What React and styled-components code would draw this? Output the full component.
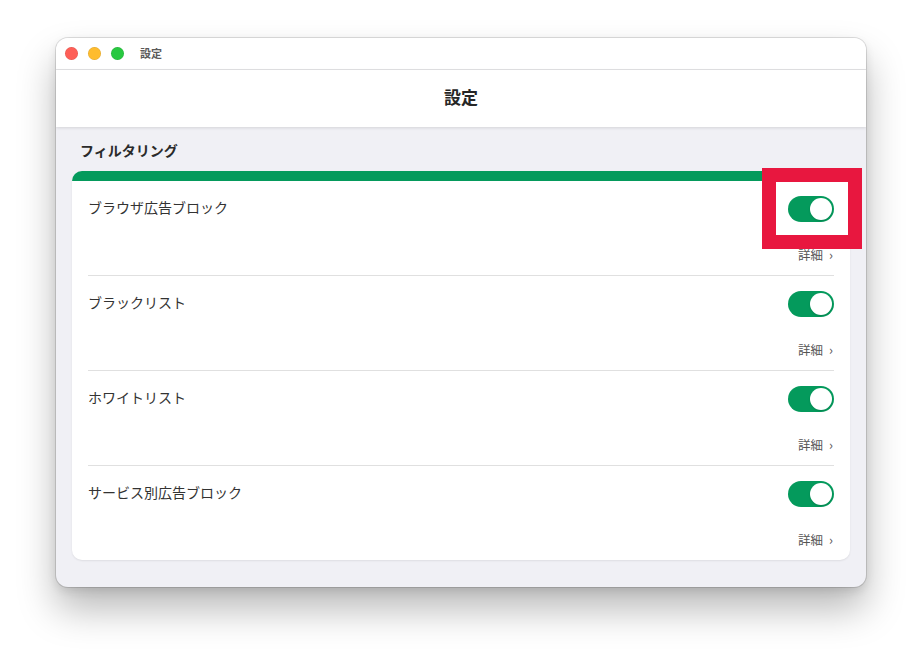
import React from "react";
import styled, { createGlobalStyle } from "styled-components";

const GlobalStyle = createGlobalStyle`
  html, body {
    margin: 0;
    padding: 0;
    background: #ffffff;
    font-family: "Noto Sans CJK JP", "Noto Sans", sans-serif;
  }
`;

const Page = styled.div`
  position: relative;
  width: 922px;
  height: 661px;
  padding: 38px 0 0 56px;
  box-sizing: border-box;
`;

const Window = styled.div`
  width: 810px;
  height: 549px;
  border-radius: 12px;
  overflow: hidden;
  background: #f0f0f5;
  display: flex;
  flex-direction: column;
  box-shadow: 0 0 0 1px rgba(0, 0, 0, 0.12), 0 22px 38px rgba(0, 0, 0, 0.28),
    0 4px 10px rgba(0, 0, 0, 0.1);
`;

const TitleBar = styled.div`
  height: 31px;
  display: flex;
  align-items: center;
  padding-left: 9px;
  gap: 10px;
  background: #ffffff;
  border-bottom: 1px solid #e2e2e4;
`;

const Light = styled.span`
  width: 13px;
  height: 13px;
  border-radius: 50%;
  background: ${p => p.color};
  box-shadow: inset 0 0 0 0.5px rgba(0, 0, 0, 0.12);
`;

const WindowTitle = styled.span`
  margin-left: 6px;
  font-size: 11px;
  font-weight: 700;
  color: #5a5a5a;
  padding-bottom: 1px;
`;

const Header = styled.div`
  height: 57px;
  padding-bottom: 4px;
  box-sizing: border-box;
  display: flex;
  align-items: center;
  justify-content: center;
  background: #ffffff;
  font-size: 17px;
  font-weight: 700;
  color: #262626;
  box-shadow: 0 1px 3px rgba(0, 0, 0, 0.12);
  position: relative;
  z-index: 1;
`;

const Content = styled.div`
  flex: 1;
  padding: 13px 16px 0;
`;

const SectionTitle = styled.div`
  font-size: 14px;
  font-weight: 700;
  line-height: 20px;
  color: #2a2a2a;
  padding-left: 8px;
  margin-bottom: 11px;
`;

const Card = styled.div`
  background: #ffffff;
  border-radius: 10px;
  border-top: 10px solid #049a5c;
  box-shadow: 0 1px 2px rgba(0, 0, 0, 0.08);
`;

const Row = styled.div`
  margin: 0 16px;
  padding: 15px 0 11px;
  border-bottom: ${p => (p.last ? "none" : "1px solid #e0e0e0")};
  display: flex;
  flex-direction: column;
`;

const TopLine = styled.div`
  height: 26px;
  display: flex;
  align-items: center;
  justify-content: space-between;
`;

const Label = styled.span`
  font-size: 14px;
  color: #333333;
  padding-bottom: 4px;
`;

const Toggle = styled.div`
  width: 46px;
  height: 26px;
  border-radius: 13px;
  background: #049a5c;
  display: flex;
  align-items: center;
  justify-content: flex-end;
  padding: 2px;
  box-sizing: border-box;
`;

const Knob = styled.span`
  width: 22px;
  height: 22px;
  border-radius: 50%;
  background: #ffffff;
  box-shadow: 0 1px 2px rgba(0, 0, 0, 0.15);
`;

const DetailLine = styled.div`
  margin-top: 24px;
  height: 18px;
  padding-bottom: 2px;
  box-sizing: border-box;
  display: flex;
  justify-content: flex-end;
  align-items: center;
  gap: 6px;
  font-size: 12.5px;
  color: #555555;
`;

const Chevron = styled.span`
  font-size: 13px;
  color: #555555;
  line-height: 1;
  padding-right: 1px;
`;

const Highlight = styled.div`
  position: absolute;
  left: 762px;
  top: 168px;
  width: 100px;
  height: 81px;
  box-sizing: border-box;
  border: 14px solid #e8173f;
`;

const items = [
  "ブラウザ広告ブロック",
  "ブラックリスト",
  "ホワイトリスト",
  "サービス別広告ブロック",
];

export default function App() {
  return (
    <>
      <GlobalStyle />
      <Page>
        <Window>
          <TitleBar>
            <Light color="#fe5f57" />
            <Light color="#febc2e" />
            <Light color="#28c840" />
            <WindowTitle>設定</WindowTitle>
          </TitleBar>
          <Header>設定</Header>
          <Content>
            <SectionTitle>フィルタリング</SectionTitle>
            <Card>
              {items.map((label, i) => (
                <Row key={label} last={i === items.length - 1}>
                  <TopLine>
                    <Label>{label}</Label>
                    <Toggle>
                      <Knob />
                    </Toggle>
                  </TopLine>
                  <DetailLine>
                    詳細
                    <Chevron>›</Chevron>
                  </DetailLine>
                </Row>
              ))}
            </Card>
          </Content>
        </Window>
        <Highlight />
      </Page>
    </>
  );
}
